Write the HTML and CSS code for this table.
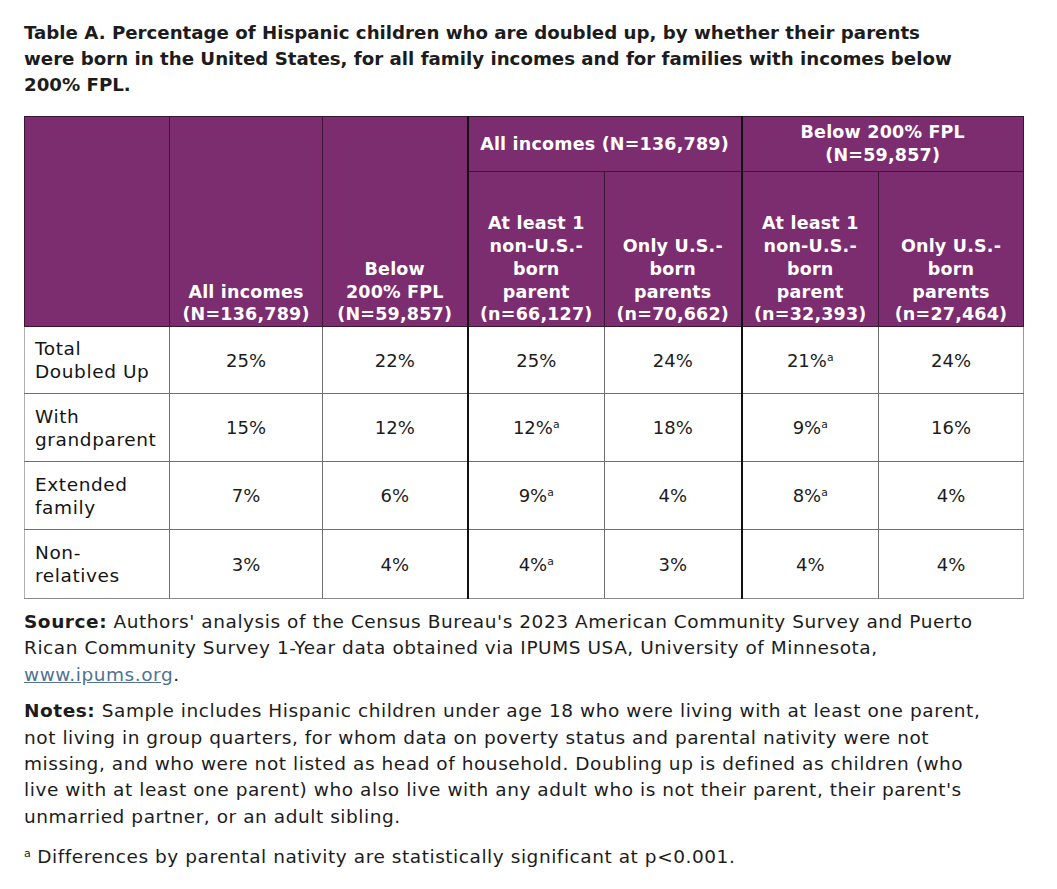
FILE: index.html
```html
<!DOCTYPE html>
<html>
<head>
<meta charset="utf-8">
<link rel="stylesheet" href="styles.css">
</head>
<body>
<div class="page">
  <h1 class="title">Table A. Percentage of Hispanic children who are doubled up, by whether their parents<br>were born in the United States, for all family incomes and for families with incomes below<br>200% FPL.</h1>
  <table class="data">
    <colgroup>
      <col class="c1"><col class="c2"><col class="c3"><col class="c4"><col class="c5"><col class="c6"><col class="c7">
    </colgroup>
    <thead>
      <tr class="hr1">
        <th rowspan="2" class="bottom"></th>
        <th rowspan="2" class="bottom">All incomes<br>(N=136,789)</th>
        <th rowspan="2" class="bottom thick-r">Below<br>200% FPL<br>(N=59,857)</th>
        <th colspan="2" class="group thick-r">All incomes (N=136,789)</th>
        <th colspan="2" class="group">Below 200% FPL<br>(N=59,857)</th>
      </tr>
      <tr class="hr2">
        <th class="bottom">At least 1<br>non-U.S.-<br>born<br>parent<br>(n=66,127)</th>
        <th class="bottom thick-r">Only U.S.-<br>born<br>parents<br>(n=70,662)</th>
        <th class="bottom">At least 1<br>non-U.S.-<br>born<br>parent<br>(n=32,393)</th>
        <th class="bottom">Only U.S.-<br>born<br>parents<br>(n=27,464)</th>
      </tr>
    </thead>
    <tbody>
      <tr class="first">
        <td class="label">Total<br>Doubled Up</td>
        <td>25%</td><td class="thick-r">22%</td><td>25%</td><td class="thick-r">24%</td><td>21%<sup>a</sup></td><td>24%</td>
      </tr>
      <tr>
        <td class="label">With<br>grandparent</td>
        <td>15%</td><td class="thick-r">12%</td><td>12%<sup>a</sup></td><td class="thick-r">18%</td><td>9%<sup>a</sup></td><td>16%</td>
      </tr>
      <tr>
        <td class="label">Extended<br>family</td>
        <td>7%</td><td class="thick-r">6%</td><td>9%<sup>a</sup></td><td class="thick-r">4%</td><td>8%<sup>a</sup></td><td>4%</td>
      </tr>
      <tr class="last">
        <td class="label">Non-<br>relatives</td>
        <td>3%</td><td class="thick-r">4%</td><td>4%<sup>a</sup></td><td class="thick-r">3%</td><td>4%</td><td>4%</td>
      </tr>
    </tbody>
  </table>
  <p class="note first"><b>Source:</b> Authors' analysis of the Census Bureau's 2023 American Community Survey and Puerto<br>Rican Community Survey 1-Year data obtained via IPUMS USA, University of Minnesota,<br><a href="#">www.ipums.org</a>.</p>
  <p class="note"><b>Notes:</b> Sample includes Hispanic children under age 18 who were living with at least one parent,<br>not living in group quarters, for whom data on poverty status and parental nativity were not<br>missing, and who were not listed as head of household. Doubling up is defined as children (who<br>live with at least one parent) who also live with any adult who is not their parent, their parent's<br>unmarried partner, or an adult sibling.</p>
  <p class="note foot"><sup>a</sup> Differences by parental nativity are statistically significant at p&lt;0.001.</p>
</div>
</body>
</html>
```

FILE: styles.css
```css
html, body {
  margin: 0;
  padding: 0;
  background: #ffffff;
}

body {
  font-family: "DejaVu Sans", "Liberation Sans", sans-serif;
  color: #1c1c1c;
}

.page {
  padding: 20px 24px 0 24px;
  width: 999px;
}

.title {
  margin: 0;
  font-size: 18.2px;
  line-height: 26px;
  font-weight: bold;
  white-space: nowrap;
}

.data {
  margin-top: 18px;
  border-collapse: collapse;
  table-layout: fixed;
  width: 999px;
  font-size: 18px;
}

.c1 { width: 145px; }
.c2 { width: 153px; }
.c3 { width: 145px; }
.c4 { width: 137px; }
.c5 { width: 137px; }
.c6 { width: 137px; }
.c7 { width: 145px; }

.data th {
  background: #7b2d70;
  color: #ffffff;
  font-weight: bold;
  font-size: 17.5px;
  letter-spacing: 0.2px;
  line-height: 22.75px;
  border: 1px solid #3a1534;
  padding: 0 4px;
  text-align: center;
  white-space: nowrap;
}

.hr1 th.group {
  height: 54px;
  vertical-align: middle;
}

.data th.bottom {
  vertical-align: bottom;
}

.hr2 th {
  height: 154px;
}

.data td {
  border: 1px solid #6f6f6f;
  height: 67px;
  text-align: center;
  vertical-align: middle;
  line-height: 23px;
  padding: 0 6px;
}

.data tr.first td {
  height: 66px;
}

.data tr.last td {
  height: 68px;
}

.data td.label {
  text-align: left;
  padding-left: 10px;
  font-size: 18.5px;
  letter-spacing: 0.6px;
  white-space: nowrap;
  color: #141414;
  border-left-color: #b0b0b0;
}

.data td:last-child {
  border-right-color: #9a9a9a;
}

.data tr.last td {
  border-bottom-color: #8a8a8a;
}

.data .thick-r {
  border-right: 2px solid #111111;
}

sup {
  font-size: 0.6em;
  line-height: 0;
  vertical-align: 0.55em;
  letter-spacing: 0;
}

.note {
  margin: 0;
  font-size: 18.5px;
  letter-spacing: 0.55px;
  line-height: 26.4px;
  white-space: nowrap;
}

.note.first {
  margin-top: 10px;
}

.note + .note {
  margin-top: 10px;
}

.note.foot {
  margin-top: 14px;
}

.note a {
  color: #4f7390;
  text-decoration: underline;
}
```
